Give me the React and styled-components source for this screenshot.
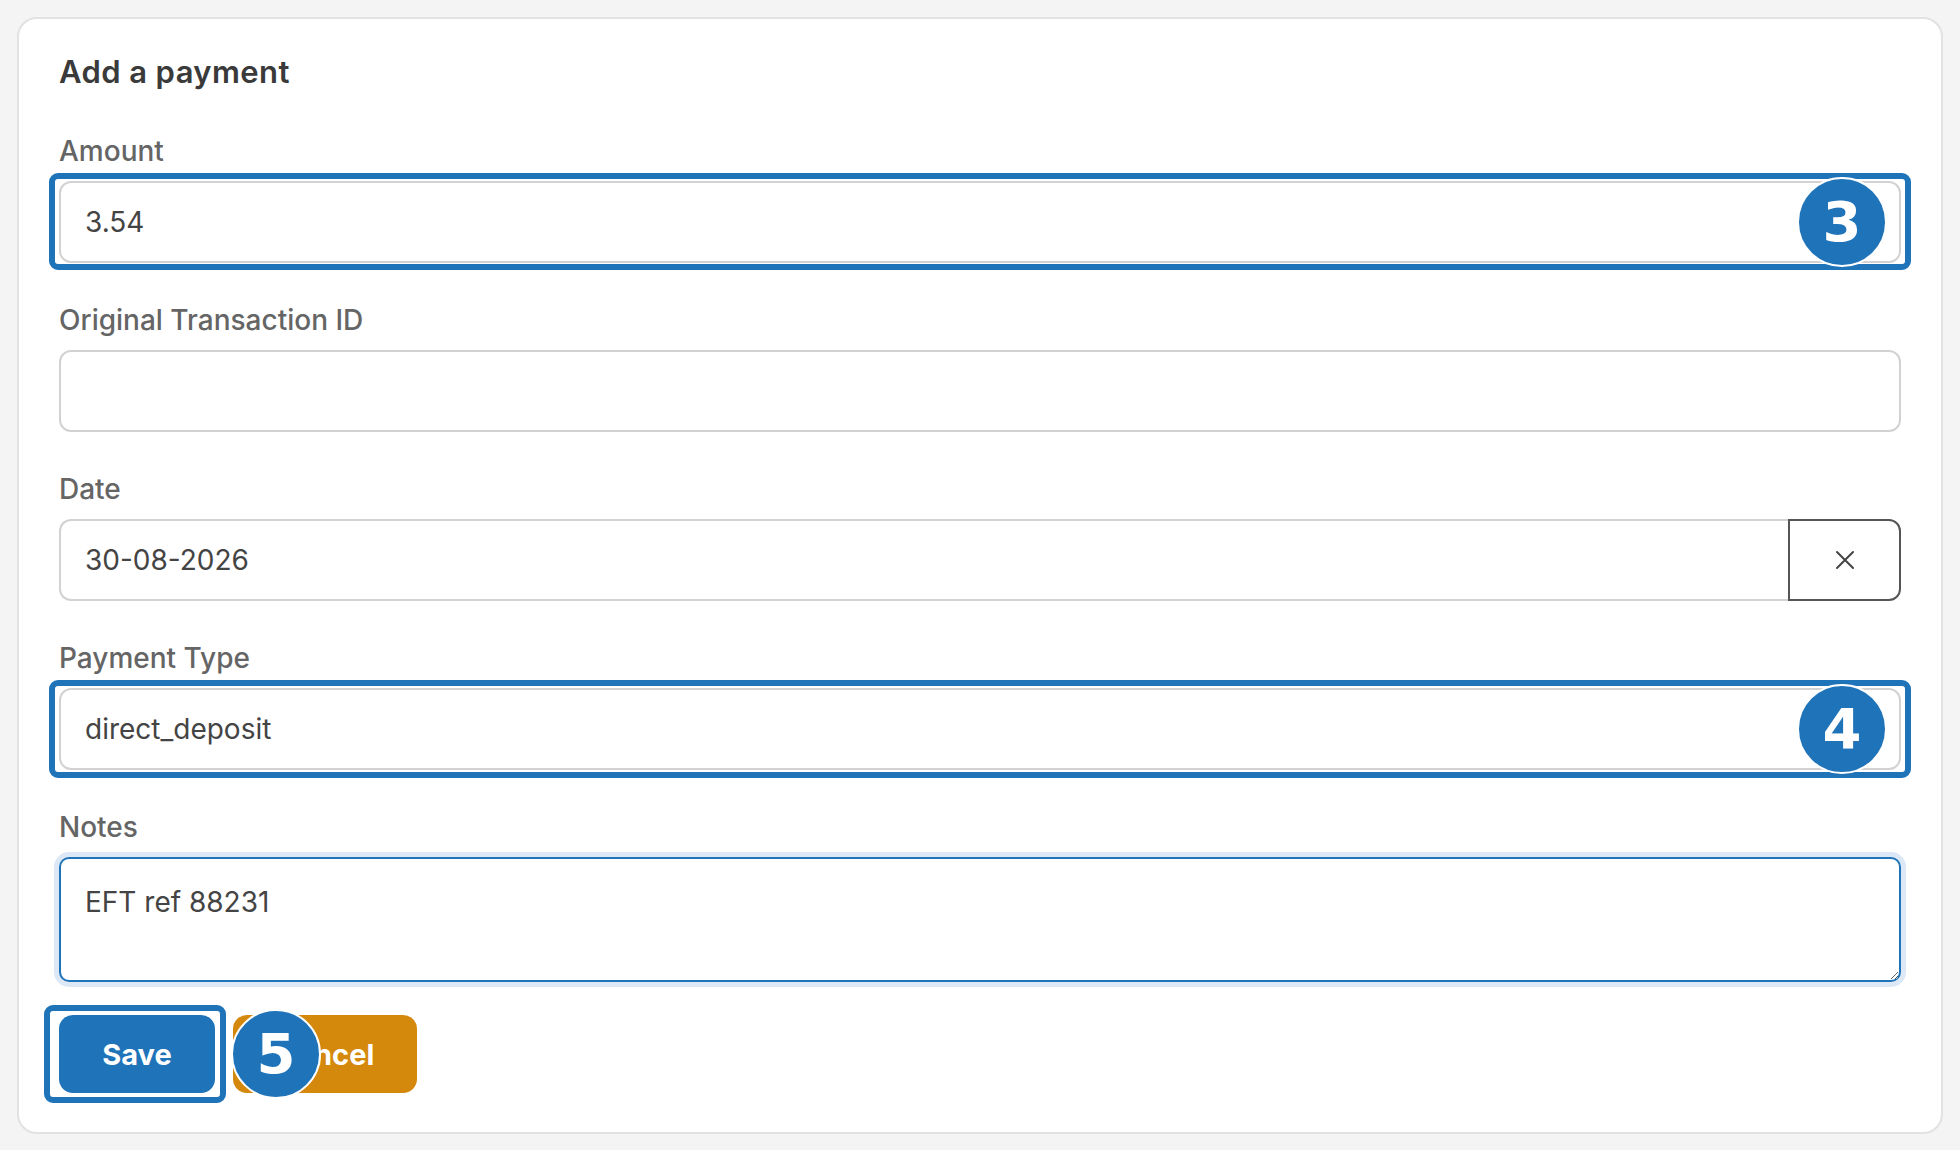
import styled, { createGlobalStyle } from "styled-components";

// global

const GlobalStyle = createGlobalStyle`
* { box-sizing: border-box; }
html, body {
    margin: 0;
    padding: 0;
    background: #f4f4f4;
    font-family: Inter, "Noto Sans", "Liberation Sans", sans-serif;
}
`

// layout

const Page = styled.div`
padding: 17px;
`
const Card = styled.form`
background: #fff;
border: 2px solid #e2e2e2;
border-radius: 20px;
padding: 35px 40px 39px;
`
const Title = styled.h2`
margin: 0 0 45px 0;
font-size: 31px;
line-height: 36px;
font-weight: 600;
color: #3a3a3a;
letter-spacing: 0.4px;
`

// fields

const Field = styled.div`
margin: 0 0 ${props => props.$gap || 41}px 0;
`
const Label = styled.label`
display: block;
margin: 0 0 14px 0;
font-size: 28px;
line-height: 32px;
font-weight: 500;
color: #656565;
`
const Input = styled.input`
display: block;
width: 100%;
height: 82px;
padding: 0 24px;
border: 2px solid #d2d2d2;
border-radius: ${props => props.$joined ? "12px 0 0 12px" : "12px"};
${props => props.$joined && "border-right: none;"}
background: #fff;
font-family: inherit;
font-size: 28px;
color: #444;
outline: none;
`
const DateRow = styled.div`
display: flex;
`
const ClearBtn = styled.button`
flex: 0 0 113px;
height: 82px;
display: flex;
align-items: center;
justify-content: center;
border: 2px solid #555;
border-radius: 0 12px 12px 0;
background: #fff;
padding: 0;
`
const TextArea = styled.textarea`
display: block;
width: 100%;
height: 125px;
padding: 26px 24px 10px;
border: 2px solid #1f73b9;
border-radius: 10px;
box-shadow: 0 0 0 5px #dce8f5;
font-family: inherit;
font-size: 28px;
line-height: 34px;
color: #444;
outline: none;
`

// buttons

const BtnRow = styled.div`
display: flex;
gap: 18px;
`
const Btn = styled.button`
width: ${props => props.$w}px;
height: 78px;
border: none;
border-radius: 14px;
background: ${props => props.$bg};
color: #fff;
font-family: inherit;
font-size: 29px;
font-weight: 700;
`

// annotation

const Annotated = styled.div`
position: relative;
`
const Highlight = styled.span`
position: absolute;
inset: ${props => props.$inset};
border: 6px solid #1f73b9;
border-radius: 9px;
pointer-events: none;
`
const Badge = styled.span`
position: absolute;
top: 50%;
${props => props.$left ? `left: ${props.$left};` : `right: ${props.$right};`}
transform: translateY(-50%);
z-index: 2;
width: 90px;
height: 90px;
border-radius: 50%;
border: 2.5px solid #fff;
background: #1f73b9;
color: #fff;
display: flex;
align-items: center;
justify-content: center;
font-family: "DejaVu Sans", "Liberation Sans", sans-serif;
font-size: 56px;
font-weight: 700;
line-height: 1;
`

const XIcon = () => (
    <svg width="20" height="20" viewBox="0 0 20 20">
        <path d="M2 2 L18 18 M18 2 L2 18" stroke="#444" strokeWidth="2" strokeLinecap="round" fill="none" />
    </svg>
)

const App = () => {
    return (
        <Page>
            <GlobalStyle />
            <Card onSubmit={e => e.preventDefault()}>
                <Title>Add a payment</Title>

                <Field>
                    <Label>Amount</Label>
                    <Annotated>
                        <Input type="text" defaultValue="3.54" />
                        <Highlight $inset="-8px -10px -7px -10px" />
                        <Badge $right="14px">3</Badge>
                    </Annotated>
                </Field>

                <Field>
                    <Label>Original Transaction ID</Label>
                    <Input type="text" defaultValue="" />
                </Field>

                <Field>
                    <Label>Date</Label>
                    <DateRow>
                        <Input type="text" defaultValue="30-08-2026" $joined />
                        <ClearBtn type="button"><XIcon /></ClearBtn>
                    </DateRow>
                </Field>

                <Field>
                    <Label>Payment Type</Label>
                    <Annotated>
                        <Input type="text" defaultValue="direct_deposit" />
                        <Highlight $inset="-8px -10px -8px -10px" />
                        <Badge $right="14px">4</Badge>
                    </Annotated>
                </Field>

                <Field $gap={33}>
                    <Label>Notes</Label>
                    <TextArea defaultValue="EFT ref 88231" />
                </Field>

                <BtnRow>
                    <Annotated>
                        <Btn type="submit" $w={156} $bg="#1f73b9">Save</Btn>
                        <Highlight $inset="-10px -11px -10px -15px" />
                        <Badge $left="calc(100% + 16px)">5</Badge>
                    </Annotated>
                    <Btn type="button" $w={184} $bg="#d5890c">Cancel</Btn>
                </BtnRow>
            </Card>
        </Page>
    )
}

export default App;
